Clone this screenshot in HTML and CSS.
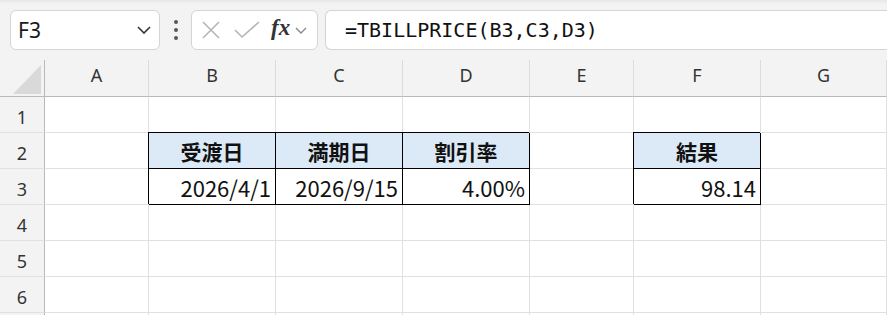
FILE: index.html
```html
<!DOCTYPE html>
<html lang="ja">
<head>
  <meta charset="UTF-8">
  <title>TBILLPRICE</title>
  <link rel="stylesheet" href="styles.css">
</head>
<body>

  <!-- Formula bar -->
  <div class="toolbar">
    <div class="namebox">
      <span class="ref">F3</span>
      <svg class="chev" width="14" height="8" viewBox="0 0 14 8"><path d="M1 1l6 6 6-6" fill="none" stroke="#333" stroke-width="1.6"/></svg>
    </div>
    <div class="grip"><i></i><i></i><i></i></div>
    <div class="fxbox">
      <svg width="20" height="20" viewBox="0 0 20 20"><path d="M2 2l16 16M18 2L2 18" stroke="#b5b5b5" stroke-width="1.6" fill="none"/></svg>
      <svg width="26" height="18" viewBox="0 0 26 18"><path d="M1 9l7 7L25 1" stroke="#b5b5b5" stroke-width="1.6" fill="none"/></svg>
      <span class="fx">fx</span>
      <svg width="12" height="7" viewBox="0 0 12 7"><path d="M1 1l5 5 5-5" fill="none" stroke="#888" stroke-width="1.4"/></svg>
    </div>
    <div class="formula">=TBILLPRICE(B3,C3,D3)</div>
  </div>

  <!-- Sheet grid -->
  <div class="sheet">
    <div class="corner"><svg width="28" height="29" viewBox="0 0 28 29"><polygon points="28,0 28,29 0,29" fill="#d9d9d9"/></svg></div>
    <div class="colhead">A</div>
    <div class="colhead">B</div>
    <div class="colhead">C</div>
    <div class="colhead">D</div>
    <div class="colhead">E</div>
    <div class="colhead">F</div>
    <div class="colhead">G</div>

    <div class="rowhead">1</div>
    <div class="cell"></div><div class="cell"></div><div class="cell"></div><div class="cell"></div><div class="cell"></div><div class="cell"></div><div class="cell"></div>

    <div class="rowhead">2</div>
    <div class="cell"></div>
    <div class="cell hd">受渡日</div>
    <div class="cell hd">満期日</div>
    <div class="cell hd">割引率</div>
    <div class="cell"></div>
    <div class="cell hd">結果</div>
    <div class="cell"></div>

    <div class="rowhead">3</div>
    <div class="cell"></div>
    <div class="cell num bd">2026/4/1</div>
    <div class="cell num bd">2026/9/15</div>
    <div class="cell num bd">4.00%</div>
    <div class="cell"></div>
    <div class="cell num bd">98.14</div>
    <div class="cell"></div>

    <div class="rowhead">4</div>
    <div class="cell"></div><div class="cell"></div><div class="cell"></div><div class="cell"></div><div class="cell"></div><div class="cell"></div><div class="cell"></div>

    <div class="rowhead">5</div>
    <div class="cell"></div><div class="cell"></div><div class="cell"></div><div class="cell"></div><div class="cell"></div><div class="cell"></div><div class="cell"></div>

    <div class="rowhead">6</div>
    <div class="cell"></div><div class="cell"></div><div class="cell"></div><div class="cell"></div><div class="cell"></div><div class="cell"></div><div class="cell"></div>

    <!-- row 7 only peeks in at the bottom edge -->
    <div class="rowhead"></div>
    <div class="cell"></div><div class="cell"></div><div class="cell"></div><div class="cell"></div><div class="cell"></div><div class="cell"></div><div class="cell"></div>
  </div>

</body>
</html>
```

FILE: styles.css
```css
/* Page */
body {
  margin: 0;
  background: #fff;
  font-family: "Noto Sans CJK JP", "Noto Sans", sans-serif;
  color: #222;
  overflow: hidden;
}

/* Formula bar strip */
.toolbar {
  height: 60px;
  box-sizing: border-box;
  padding: 10px 0 0 10px;
  display: flex;
  align-items: flex-start;
  background: linear-gradient(#e6e6e6, #f3f3f3 4px);
}

.namebox {
  width: 150px;
  height: 40px;
  box-sizing: border-box;
  border: 1px solid #d4d4d4;
  border-radius: 6px;
  background: #fff;
  display: flex;
  align-items: center;
  justify-content: space-between;
  padding: 0 8px 0 7px;
}

.ref {
  font-family: "Noto Sans", sans-serif;
  font-size: 21px;
  color: #1a1a1a;
}

.grip {
  width: 31px;
  height: 40px;
  display: flex;
  flex-direction: column;
  align-items: center;
  justify-content: center;
  gap: 4px;
}

.grip i {
  width: 4px;
  height: 4px;
  border-radius: 50%;
  background: #555;
}

.fxbox {
  width: 127px;
  height: 40px;
  box-sizing: border-box;
  border: 1px solid #d4d4d4;
  border-radius: 6px;
  background: #fff;
  display: flex;
  align-items: center;
  padding: 0 0 0 9px;
}

.fxbox svg:nth-child(2) {
  margin-left: 13px;
}

.fx {
  font-family: "Liberation Serif", serif;
  font-style: italic;
  font-weight: bold;
  font-size: 23px;
  color: #333;
  margin: -4px 5px 0 11px;
}

.formula {
  flex: 1;
  height: 40px;
  box-sizing: border-box;
  margin-left: 7px;
  border: 1px solid #d4d4d4;
  border-right: none;
  border-radius: 6px 0 0 6px;
  background: #fff;
  padding-left: 19px;
  display: flex;
  align-items: center;
  font-family: "DejaVu Sans Mono", monospace;
  font-size: 20px;
  color: #111;
}

/* Worksheet */
.sheet {
  display: grid;
  grid-template-columns: 45px 104px 127px 127px 127px 104px 127px 126px;
  grid-template-rows: 37px repeat(7, 36px);
}

.sheet > div {
  box-sizing: border-box;
  display: flex;
  align-items: center;
}

.corner {
  background: #f3f3f3;
  border-right: 1px solid #b9b9b9;
  border-bottom: 1px solid #b9b9b9;
  justify-content: flex-end;
  padding: 3px 3px 0 0;
}

.colhead {
  background: #f3f3f3;
  border-right: 1px solid #dcdcdc;
  border-bottom: 1px solid #b9b9b9;
  justify-content: center;
  padding-bottom: 7px;
  font-family: "Noto Sans", sans-serif;
  font-size: 18px;
  color: #333;
}

.rowhead {
  background: #f3f3f3;
  border-right: 1px solid #b9b9b9;
  border-bottom: 1px solid #e0e0e0;
  justify-content: center;
  padding-top: 4px;
  font-family: "Noto Sans", sans-serif;
  font-size: 18px;
  color: #333;
}

.cell {
  border-right: 1px solid #e0e0e0;
  border-bottom: 1px solid #e0e0e0;
  background: #fff;
  font-size: 22px;
  color: #111;
}

/* Table header cells */
.hd {
  background: #dce9f6;
  border-right-color: #000;
  border-bottom-color: #000;
  box-shadow: -1px -1px 0 #000;
  justify-content: center;
  font-weight: bold;
  font-size: 21px;
}

/* Numbers right aligned */
.num {
  justify-content: flex-end;
  padding-right: 4px;
}

.bd {
  border-right-color: #000;
  border-bottom-color: #000;
  box-shadow: -1px -1px 0 #000;
}
```
